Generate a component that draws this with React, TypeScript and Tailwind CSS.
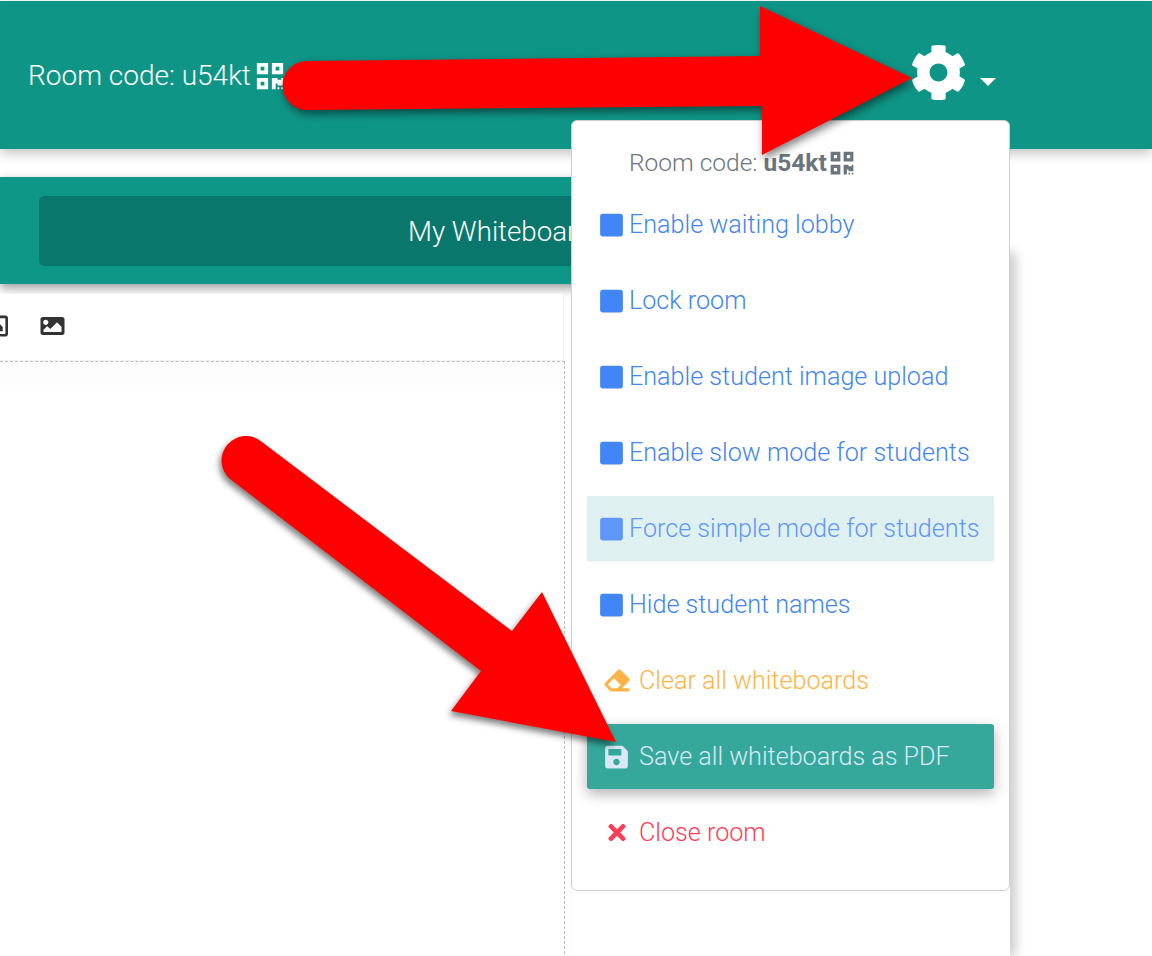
import { FaCog, FaEraser, FaImage, FaQrcode, FaRegImage, FaSave, FaSquare, FaTimes } from "react-icons/fa";

const blueItems = [
  "Enable waiting lobby",
  "Lock room",
  "Enable student image upload",
  "Enable slow mode for students",
];

function BlueItem({ label, hover }: { label: string; hover?: boolean }) {
  return (
    <div
      className={
        hover
          ? "flex h-[65px] items-center rounded-[1px] bg-[#dff0f0] pl-[13px] text-[#5f97f8] shadow-[0_1px_3px_rgba(0,0,0,0.06)]"
          : "flex h-[65px] items-center pl-[13px] text-[#4285f4]"
      }
    >
      <FaSquare className="mr-[6px] h-[26px] w-[23px] shrink-0" />
      <span>{label}</span>
    </div>
  );
}

function Arrows() {
  return (
    <svg className="pointer-events-none absolute left-0 top-0 h-[956px] w-[1152px]" viewBox="0 0 1152 956" fill="#ff0000">
      <g className="drop-shadow-[2px_4px_4px_rgba(0,0,0,0.5)]">
        <path d="M307 61 L760 56 L760 6 L912 78 L762 155 L762 106 L307 110 A24.5 24.5 0 0 1 307 61 Z" />
      </g>
      <g className="drop-shadow-[-2px_4px_3px_rgba(0,0,0,0.5)]">
        <path d="M262 442 L512 631 L542 592 L616 742 L451 711 L481 671 L230 479 A24 24 0 0 1 262 442 Z" />
      </g>
    </svg>
  );
}

export default function App() {
  return (
    <div className="relative h-[956px] w-[1152px] overflow-hidden bg-white font-['Roboto',sans-serif] font-light">
      <header className="mt-px flex h-[148px] items-center bg-[#0f9586] text-white shadow-[0_4px_12px_rgba(0,0,0,0.25)]">
        <div className="flex items-center pl-[28px] pt-[2px] text-[28px]">
          <span>Room code: u54kt</span>
          <FaQrcode className="ml-[4px] h-[30px] w-[30px]" />
        </div>
        <div className="-mt-[5px] ml-[625px] flex items-center">
          <FaCog className="h-[57px] w-[57px]" />
          <span className="ml-[13px] mt-[19px] h-0 w-0 border-x-[8px] border-t-[8px] border-x-transparent border-t-white" />
        </div>
      </header>

      <main className="mt-[28px] w-[1000px]">
        <section className="flex h-[107px] w-[900px] items-center bg-[#0e9686] pl-[39px] shadow-[0_4px_10px_rgba(0,0,0,0.4)]">
          <div className="flex h-[70px] w-full items-center rounded-[5px] bg-[#0a776c] pl-[369px] pt-[2px] text-[27.7px] text-white">
            My Whiteboards
          </div>
        </section>

        <div className="w-[565px]">
          <div className="mt-[10px] flex h-[67px] w-[564px] items-center border-r border-b border-[#f2f2f2] bg-white pb-[3px] text-[#333333]">
            <FaRegImage className="-ml-[20px] h-[28px] w-[28px]" />
            <FaImage className="ml-[32px] h-[24px] w-[25px]" />
          </div>
          <div className="-ml-[10px] h-[593px] border-r border-t border-dashed border-[#bbbbbb] bg-gradient-to-b from-[#fcfcfc] to-white to-[40px]" />
        </div>
      </main>

      <div className="absolute left-[572px] top-[252px] h-[704px] w-[438px] bg-white shadow-[6px_0_10px_rgba(0,0,0,0.2)]" />

      <div className="absolute left-[571px] top-[120px] h-[771px] w-[439px] rounded-[6px] border border-[#cfcfcf] bg-white px-[15px] text-[25.15px]">
        <div className="flex h-[71px] items-center pl-[42px] pt-[13px] text-[24.5px] text-[#6c757d]">
          <span>Room code:&nbsp;</span>
          <span className="font-bold">u54kt</span>
          <FaQrcode className="ml-[2px] h-[26px] w-[26px]" />
        </div>
        <div className="flex flex-col gap-[11px]">
          {blueItems.map((label) => (
            <BlueItem key={label} label={label} />
          ))}
          <BlueItem label="Force simple mode for students" hover />
          <BlueItem label="Hide student names" />
          <div className="flex h-[65px] items-center pl-[17px] text-[#ffb347]">
            <FaEraser className="mr-[9px] h-[25px] w-[26px] shrink-0" />
            <span>Clear all whiteboards</span>
          </div>
          <div className="flex h-[65px] items-center rounded-[3px] bg-[#35a89b] pl-[18px] text-[#d8e8f5] shadow-[0_5px_14px_rgba(0,0,0,0.3)]">
            <FaSave className="mr-[11px] h-[26px] w-[23px] shrink-0" />
            <span>Save all whiteboards as PDF</span>
          </div>
          <div className="flex h-[65px] items-center pl-[20px] text-[#ff3d57]">
            <FaTimes className="mr-[12px] h-[25px] w-[20px] shrink-0" />
            <span>Close room</span>
          </div>
        </div>
      </div>

      <Arrows />
    </div>
  );
}
